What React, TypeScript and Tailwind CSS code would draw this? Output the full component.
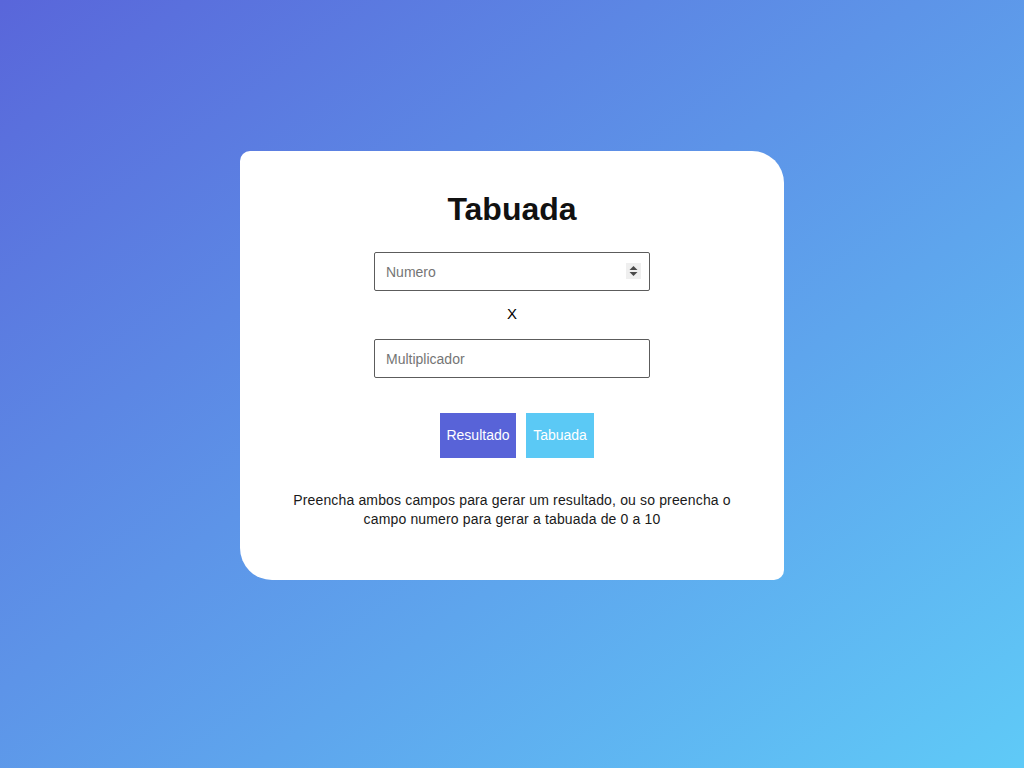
import { useState } from 'react';

// Campo numerico com as setas desenhadas (o spinner nativo só aparece no hover)
function NumberField({ placeholder, spinner }: { placeholder: string; spinner?: boolean }) {
  const [value, setValue] = useState('');
  return (
    <div className="relative w-[276px]">
      <input
        type="text"
        inputMode="numeric"
        value={value}
        onChange={(e) => setValue(e.target.value.replace(/[^0-9-]/g, ''))}
        placeholder={placeholder}
        className="block h-[39px] w-full rounded-[2px] border border-[#5c5c5c] bg-white pl-[11px] pr-8 text-[14px] text-[#222] outline-none placeholder:text-[#757575]"
      />
      {spinner && (
        <div className="absolute right-[9px] top-[11px] flex h-[16px] w-[15px] items-center justify-center bg-[#efefef]">
          <svg width="9" height="12" viewBox="0 0 9 12">
            <path d="M4.5 1 L8.5 5 L0.5 5 Z" fill="#4a4a4a" />
            <path d="M4.5 11 L8.5 7 L0.5 7 Z" fill="#4a4a4a" />
          </svg>
        </div>
      )}
    </div>
  );
}

export default function App() {
  return (
    <div
      className="flex h-screen w-full justify-center bg-linear-to-br from-[#5966da] to-[#5fcaf7] pt-[151px]"
      style={{ fontFamily: '"Liberation Sans", Arial, sans-serif' }}
    >
      <div className="flex h-[429px] w-[544px] flex-col items-center rounded-tl-[10px] rounded-tr-[32px] rounded-bl-[32px] rounded-br-[10px] bg-white pt-[40px]">
        {/* titulo */}
        <h1 className="text-[32px] font-bold leading-[37px] text-[#111]">Tabuada</h1>

        <div className="mt-[24px]">
          <NumberField placeholder="Numero" spinner />
        </div>

        <span className="mt-[14px] text-[15px] leading-[18px] text-black">X</span>

        <div className="mt-[16px]">
          <NumberField placeholder="Multiplicador" />
        </div>

        {/* botoes */}
        <div className="mt-[35px] ml-[10px] flex gap-[10px]">
          <button className="h-[45px] w-[76px] bg-[#5863d8] text-[14px] text-white">Resultado</button>
          <button className="h-[45px] w-[68px] bg-[#5bc9f5] text-[14px] text-white">Tabuada</button>
        </div>

        <p className="mt-[33px] w-[470px] text-center text-[14px] leading-[19px] tracking-[0.15px] text-[#1a1a1a]">
          Preencha ambos campos para gerar um resultado, ou so preencha o campo numero para gerar a tabuada de 0 a 10
        </p>
      </div>
    </div>
  );
}
